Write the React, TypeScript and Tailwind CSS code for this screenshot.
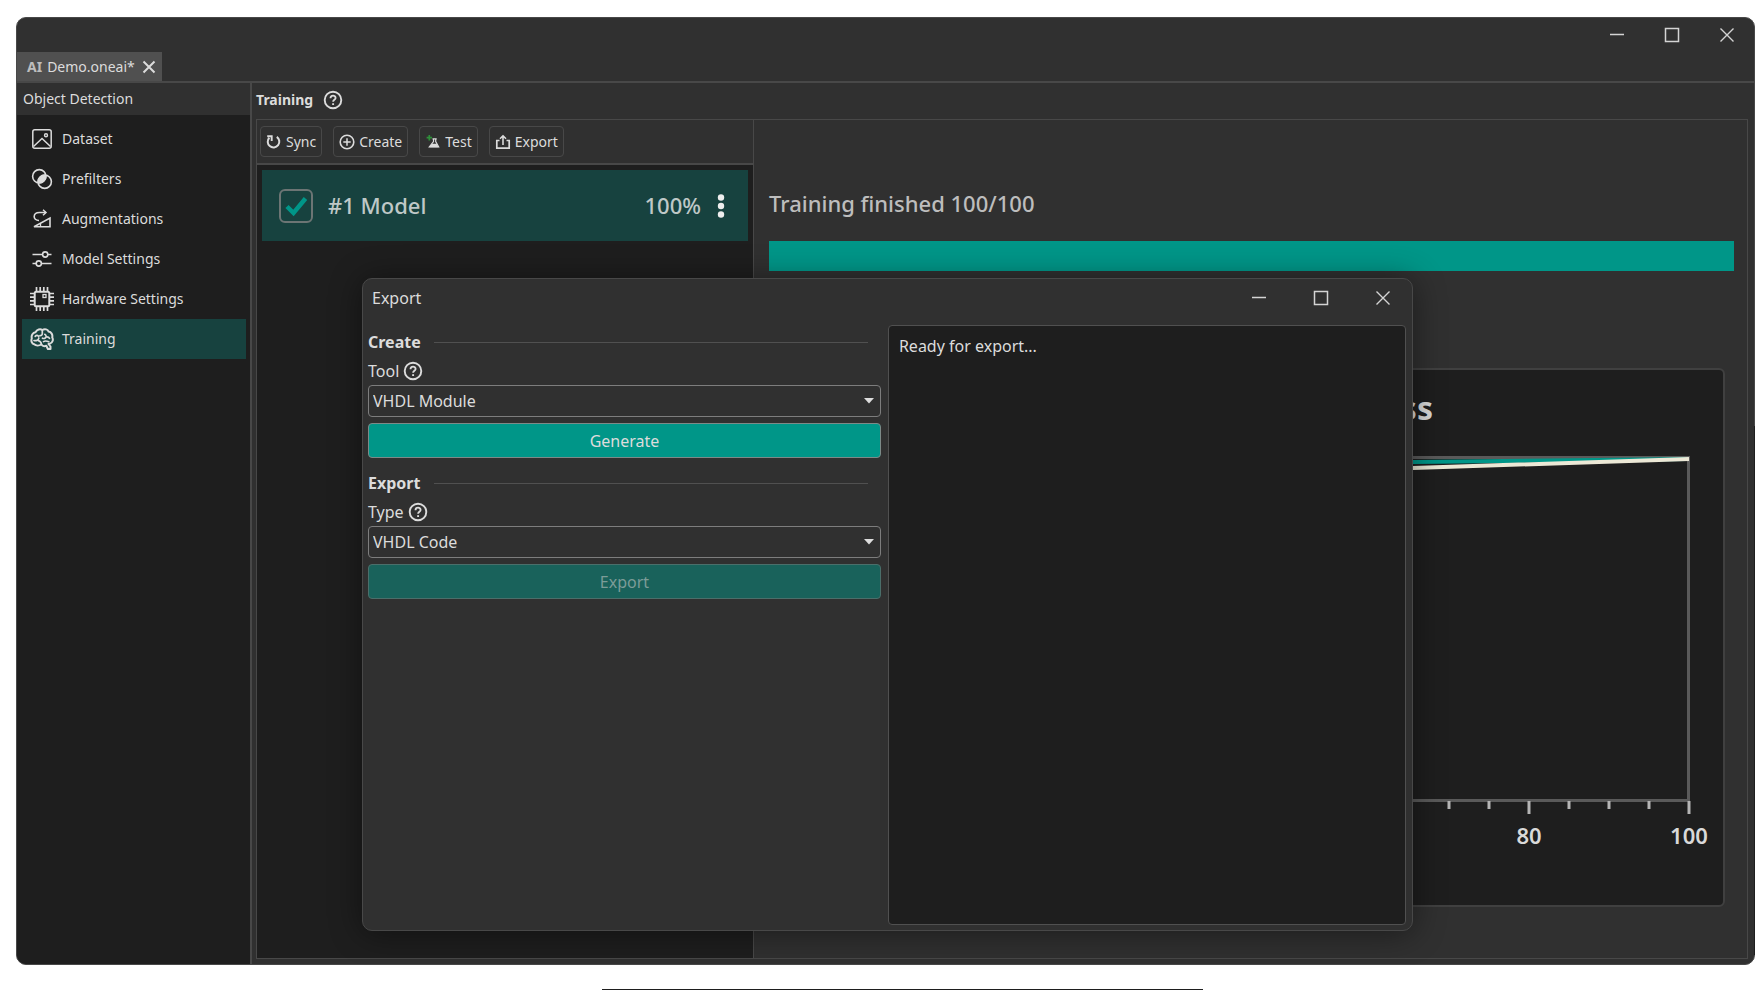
import type { ReactNode } from "react";

function Svg({ size, children }: { size: number; children: ReactNode }) {
  return (
    <svg
      width={size}
      height={size}
      viewBox={`0 0 ${size} ${size}`}
      fill="none"
      stroke="currentColor"
      className="block shrink-0"
      aria-hidden="true"
    >
      {children}
    </svg>
  );
}

const DatasetIcon = () => (
  <Svg size={24}>
    <rect x="2.800" y="2.800" width="18.400" height="18.400" rx="2" strokeWidth="1.500" />
    <path d="M3.500 19.500 12 11.500l8.500 8" strokeWidth="1.500" />
    <circle cx="16" cy="8.300" r="1.500" strokeWidth="1.400" />
  </Svg>
);

const PrefilterIcon = () => (
  <Svg size={24}>
    <circle cx="9.300" cy="9.300" r="6.700" strokeWidth="1.600" />
    <circle cx="14.700" cy="14.700" r="6.700" strokeWidth="1.600" />
    <path
      d="M15.900 8.100a6.600 6.600 0 0 0-7.800 7.800 6.600 6.600 0 0 0 7.800-7.800Z"
      fill="currentColor"
      strokeWidth="1"
    />
  </Svg>
);

const AugmentIcon = () => (
  <Svg size={24}>
    <path d="M16 5.500H9.500C2.500 5.500 2.500 13.500 9 13.500" strokeWidth="1.600" />
    <path d="M13 2.800 16 5.500l-3 2.700" strokeWidth="1.500" />
    <path d="M4 19.800 20 11v8.800H4Z" strokeWidth="1.600" />
    <path d="M10.500 19.500V17" strokeWidth="1.300" />
  </Svg>
);

const SlidersIcon = () => (
  <Svg size={24}>
    <path d="M2.500 7.500h9.800M18 7.500h3.500M2.500 16.500h3.500M11.700 16.500h9.800" strokeWidth="1.700" />
    <circle cx="15.200" cy="7.500" r="2.600" strokeWidth="1.600" />
    <circle cx="8.800" cy="16.500" r="2.600" strokeWidth="1.600" />
  </Svg>
);

const ChipIcon = () => (
  <Svg size={24}>
    <rect x="4.700" y="4.700" width="14.600" height="14.600" rx="1.500" strokeWidth="2" />
    <rect x="13" y="7.500" width="3" height="3" strokeWidth="1.300" />
    <path
      d="M6.500 0v4M10.200 0v4M13.800 0v4M17.500 0v4M6.500 20v4M10.200 20v4M13.800 20v4M17.500 20v4M0 6.500h4M0 10.200h4M0 13.800h4M0 17.500h4M20 6.500h4M20 10.200h4M20 13.800h4M20 17.500h4"
      strokeWidth="1.700"
    />
  </Svg>
);

const BrainIcon = () => (
  <Svg size={24}>
    <g strokeWidth="2" strokeLinecap="round" strokeLinejoin="round">
      <path d="M4.200 17.300C1.500 16.500.9 13.500 1.800 11.300 1 8.200 3 5.500 5.500 5.200 7 2.300 10.300 1.600 12.300 3c2.500-1.600 5.500-.6 6.300 1.600 2.700.3 4.300 3.200 3.600 5.600 1.400 2.500.4 5.600-2.200 6.400L18.500 17l2 2.500v2.500h-2.600l-1.600-3.200c-2 .7-4 .1-4.900-1.300-2.200 1.300-5.600 1.300-7.200-.2Z" />
      <path d="M5.200 9.300c1.200-1.300 2.800-1 3.500.2M4 13.500c2 .4 4.500.1 4.800-2.300M8.500 13.600c1.600.6 2.700 1.700 2.900 3.600M12.300 3.200v3.600c-.1 1.400-1.200 1.900-2.300 1.700M12.500 11.200c1.200.6 3 .3 3.500-1.200.3-1.300-.3-2.300-1.200-2.700M16.200 9.900c1.500-.2 2.700.3 3.300 1.400M13.500 14.600c1.500-1 3.500-.6 5.300.2" strokeWidth="1.700" />
    </g>
  </Svg>
);

const HelpIcon = () => (
  <Svg size={20}>
    <circle cx="10" cy="10" r="8.300" strokeWidth="1.900" />
    <path d="M7.500 8.300c0-3.500 5.100-3.300 5.100-.4 0 1.900-2.500 1.900-2.500 3.900" strokeWidth="1.800" />
    <path d="M10.100 13.200V15" strokeWidth="1.900" />
  </Svg>
);

const SyncIcon = () => (
  <Svg size={16}>
    <path d="M10.800 2.900A5.800 5.800 0 1 1 3.300 3.700" strokeWidth="2" />
    <path d="M1.200 2.300h4.500v4.600" strokeWidth="1.900" />
  </Svg>
);

const CreateIcon = () => (
  <Svg size={16}>
    <circle cx="8" cy="8" r="6.800" strokeWidth="1.600" />
    <path d="M8 4.300v7.400M4.300 8h7.400" strokeWidth="1.500" />
  </Svg>
);

const TestIcon = () => (
  <Svg size={16}>
    <path d="M4.300 1v5.400M1.600 3.700H7" stroke="#2f8f3a" strokeWidth="1.700" />
    <path d="M7.500 4.800h4.200" strokeWidth="1.300" />
    <path d="M8.500 5v2.500L4.300 13h9.400L10.700 7.500V5" strokeWidth="1.200" />
    <path d="M6.800 9.800h4.800l2 3.500H4.500Z" fill="currentColor" stroke="none" />
  </Svg>
);

const ExportIcon = () => (
  <Svg size={16}>
    <path d="M4.500 6.500H1.800v7.700h12.400V6.500h-2.700" strokeWidth="1.700" />
    <path d="M8 11V2M5 4.800 8 1.800l3 3" strokeWidth="1.600" />
  </Svg>
);

const MoreIcon = () => (
  <svg width="8" height="26" viewBox="0 0 8 26" fill="currentColor" className="block" aria-hidden="true">
    <circle cx="4" cy="4.500" r="3.200" />
    <circle cx="4" cy="13" r="3.200" />
    <circle cx="4" cy="21.500" r="3.200" />
  </svg>
);

const navItems = [
  { label: "Dataset", icon: <DatasetIcon /> },
  { label: "Prefilters", icon: <PrefilterIcon /> },
  { label: "Augmentations", icon: <AugmentIcon /> },
  { label: "Model Settings", icon: <SlidersIcon /> },
  { label: "Hardware Settings", icon: <ChipIcon /> },
  { label: "Training", icon: <BrainIcon />, active: true },
];

const toolbarItems = [
  { label: "Sync", icon: <SyncIcon /> },
  { label: "Create", icon: <CreateIcon /> },
  { label: "Test", icon: <TestIcon /> },
  { label: "Export", icon: <ExportIcon /> },
];

function WindowControls({ buttonClass }: { buttonClass: string }) {
  return (
    <div className="flex text-[#d4d4d4]">
      <button type="button" aria-label="Minimize" className={buttonClass}>
        <Svg size={16}>
          <path d="M1 7.500h14" strokeWidth="1.500" />
        </Svg>
      </button>
      <button type="button" aria-label="Maximize" className={buttonClass}>
        <Svg size={16}>
          <rect x="1.500" y="1.500" width="13" height="13" strokeWidth="1.500" />
        </Svg>
      </button>
      <button type="button" aria-label="Close" className={buttonClass}>
        <Svg size={16}>
          <path d="M1.500 1.500l13 13M14.500 1.500l-13 13" strokeWidth="1.400" />
        </Svg>
      </button>
    </div>
  );
}

function Sidebar() {
  return (
    <aside className="flex w-[235px] shrink-0 flex-col border-r-2 border-[#484848] bg-[#1e1e1e]">
      <h2 className="flex h-8 items-center bg-[#303030] pl-[6px]">Object Detection</h2>
      <nav className="flex flex-col pt-1 pr-1 pl-[5px]">
        {navItems.map((item) => (
          <a
            key={item.label}
            href="#"
            className={
              item.active
                ? "flex h-10 items-center gap-2 bg-[#17423f] pl-2"
                : "flex h-10 items-center gap-2 pl-2"
            }
          >
            {item.icon}
            {item.label}
          </a>
        ))}
      </nav>
    </aside>
  );
}

function ModelList() {
  return (
    <section className="flex w-[497px] shrink-0 flex-col border-r border-[#484848] bg-[#1e1e1e]">
      <div className="flex h-[45px] items-start gap-[11px] border-b-2 border-[#484848] bg-[#303030] pt-[6px] pl-[3px]">
        {toolbarItems.map((item) => (
          <button
            key={item.label}
            type="button"
            className="flex h-[31px] items-center gap-1 rounded border border-[#484848] px-[5px]"
          >
            {item.icon}
            {item.label}
          </button>
        ))}
      </div>
      <div className="px-[5px] pt-[5px]">
        <div className="flex h-[71px] items-center bg-[#17423f] pr-[23px] pl-[17px] text-[22px] font-medium text-[#bfc8c7]">
          <label className="flex items-center gap-[15px]">
            <span className="relative flex">
              <input
                type="checkbox"
                defaultChecked
                className="peer size-[34px] appearance-none rounded-md border-2 border-[#6c7574]"
              />
              <svg
                viewBox="0 0 34 34"
                className="pointer-events-none absolute inset-0 hidden size-[34px] peer-checked:block"
                fill="none"
                stroke="#009688"
                strokeWidth="4.500"
                aria-hidden="true"
              >
                <path d="M8 17.500 14.500 24 26.500 9.500" />
              </svg>
            </span>
            <span className="pb-[2px]">#1 Model</span>
          </label>
          <span className="ml-auto pb-[2px]">100%</span>
          <button type="button" aria-label="Model actions" className="ml-4 text-[#eeeeee]">
            <MoreIcon />
          </button>
        </div>
      </div>
    </section>
  );
}

const minorTicks = [5, 10, 15, 25, 30, 35, 45, 50, 55, 65, 70, 75, 85, 90, 95];
const majorTicks = [0, 20, 40, 60, 80, 100];

function Chart() {
  return (
    <figure className="flex flex-1 justify-end overflow-hidden rounded-md border-2 border-[#404040] bg-[#1e1e1e]">
      <svg width="940" height="534" viewBox="0 0 940 534" className="block shrink-0" role="img" aria-label="Progress">
        <text x="650" y="50" textAnchor="end" fontSize="32" fontWeight="700" fill="#d9d9d9">
          Progress
        </text>
        <path d="M106 430V87.500H905.500V430" fill="none" stroke="#5a5a5a" strokeWidth="3" />
        <path d="M106 430.500H907" stroke="#5a5a5a" strokeWidth="3" />
        <path d="M106 300C180 120 300 94 630 92L905 89" fill="none" stroke="#009688" strokeWidth="4" />
        <path d="M106 340C180 150 300 108 630 98L906 89" fill="none" stroke="#ece8d6" strokeWidth="4" />
        {minorTicks.map((t) => (
          <path key={t} d={`M${106 + t * 8} 431v8`} stroke="#b4b4b4" strokeWidth="3" />
        ))}
        {majorTicks.map((t) => (
          <g key={t}>
            <path d={`M${106 + t * 8} 431v13`} stroke="#b4b4b4" strokeWidth="3" />
            <text x={106 + t * 8} y="474" textAnchor="middle" fontSize="22" fontWeight="600" fill="#d9d9d9">
              {t}
            </text>
          </g>
        ))}
      </svg>
    </figure>
  );
}

function TrainingStatus() {
  return (
    <section className="flex min-w-0 flex-1 flex-col pt-[67px] pr-[13px] pb-[51px] pl-[15px]">
      <p className="text-[22px] leading-8 font-medium text-[#bdbdbd]">Training finished 100/100</p>
      <div
        role="progressbar"
        aria-label="Training progress"
        aria-valuenow={100}
        className="mt-[22px] h-[30px] bg-[#009688]"
      />
      <div className="flex flex-1 px-[9px] pt-[97px]">
        <Chart />
      </div>
    </section>
  );
}

function ExportGroup({
  title,
  field,
  id,
  value,
  action,
  disabled,
}: {
  title: string;
  field: string;
  id: string;
  value: string;
  action: string;
  disabled?: boolean;
}) {
  return (
    <section className="flex flex-col">
      <div className="flex h-[30px] items-center">
        <h3 className="w-[66px] font-bold">{title}</h3>
        <div className="mr-[13px] h-px flex-1 bg-[#505050]" />
      </div>
      <div className="flex h-7 items-center gap-1">
        <label htmlFor={id}>{field}</label>
        <HelpIcon />
      </div>
      <div className="relative">
        <select
          id={id}
          className="block h-8 w-full appearance-none rounded border border-[#7d7d7d] bg-[#303030] px-1"
        >
          <option>{value}</option>
        </select>
        <svg
          width="10"
          height="6"
          viewBox="0 0 10 6"
          className="pointer-events-none absolute top-[13px] right-[7px]"
          fill="#dddddd"
          aria-hidden="true"
        >
          <path d="M0 0h10L5 5.500Z" />
        </svg>
      </div>
      <button
        type="button"
        disabled={disabled}
        className={
          disabled
            ? "mt-[6px] h-[35px] rounded border border-[#4b6e6a] bg-[#19625b] text-[#7c9c98]"
            : "mt-[6px] h-[35px] rounded border border-[#7d8a88] bg-[#009688]"
        }
      >
        {action}
      </button>
    </section>
  );
}

function ExportDialog() {
  return (
    <div
      role="dialog"
      aria-labelledby="export-title"
      className="absolute top-[278px] right-[347px] bottom-[59px] left-[362px] flex flex-col rounded-[10px] border border-[#484848] bg-[#303030] text-base leading-5 shadow-[0_2px_32px_rgba(0,0,0,0.45)]"
    >
      <header className="flex h-[46px] shrink-0 items-start justify-between pl-[9px]">
        <h2 id="export-title" className="leading-[38px]">
          Export
        </h2>
        <WindowControls buttonClass="flex h-[38px] w-[62px] items-center justify-center pl-1" />
      </header>
      <div className="grid flex-1 grid-cols-[99fr_100fr] gap-[7px] pr-[6px] pb-[5px] pl-[5px]">
        <div className="flex flex-col gap-[10px] pt-[2px]">
          <ExportGroup title="Create" field="Tool" id="tool" value="VHDL Module" action="Generate" />
          <ExportGroup title="Export" field="Type" id="type" value="VHDL Code" action="Export" disabled />
        </div>
        <output className="rounded border border-[#505050] bg-[#1e1e1e] px-[10px] py-[10px]">
          Ready for export...
        </output>
      </div>
    </div>
  );
}

export default function App() {
  return (
    <div className="relative flex h-screen flex-col bg-white pt-[17px] pr-[5px] pb-[25px] pl-4 font-['Noto_Sans',sans-serif] text-sm leading-5 text-[#dcdcdc]">
      <div className="flex min-h-0 flex-1 flex-col overflow-hidden rounded-[10px] border border-[#484848] bg-[#303030]">
        <header className="flex h-[65px] shrink-0 items-end justify-between border-b-2 border-[#484848]">
          <div className="flex h-[29px] items-center bg-[#505050] pr-[6px] pl-[10px]">
            <span className="font-bold text-[#bdbdbd]">AI</span>
            <span className="ml-[5px]">Demo.oneai*</span>
            <button type="button" aria-label="Close tab" className="ml-[7px]">
              <Svg size={14}>
                <path d="M1.500 1.500l11 11M12.500 1.500l-11 11" strokeWidth="2" />
              </Svg>
            </button>
          </div>
          <div className="self-start">
            <WindowControls buttonClass="flex h-[34px] w-[55px] items-center justify-center" />
          </div>
        </header>
        <div className="flex min-h-0 flex-1">
          <Sidebar />
          <main className="flex min-w-0 flex-1 flex-col pr-[6px] pb-[5px] pl-1">
            <h1 className="flex h-9 items-center gap-[10px] pb-[2px] font-bold">
              Training
              <HelpIcon />
            </h1>
            <div className="flex min-h-0 flex-1 border border-[#484848]">
              <ModelList />
              <TrainingStatus />
            </div>
          </main>
        </div>
      </div>
      <ExportDialog />
      <div className="absolute top-[426px] right-[5px] bottom-[35px] w-px bg-[#1e1e1e]" />
      <div className="absolute right-[557px] bottom-0 left-[602px] h-px bg-[#1e1e1e]" />
    </div>
  );
}
